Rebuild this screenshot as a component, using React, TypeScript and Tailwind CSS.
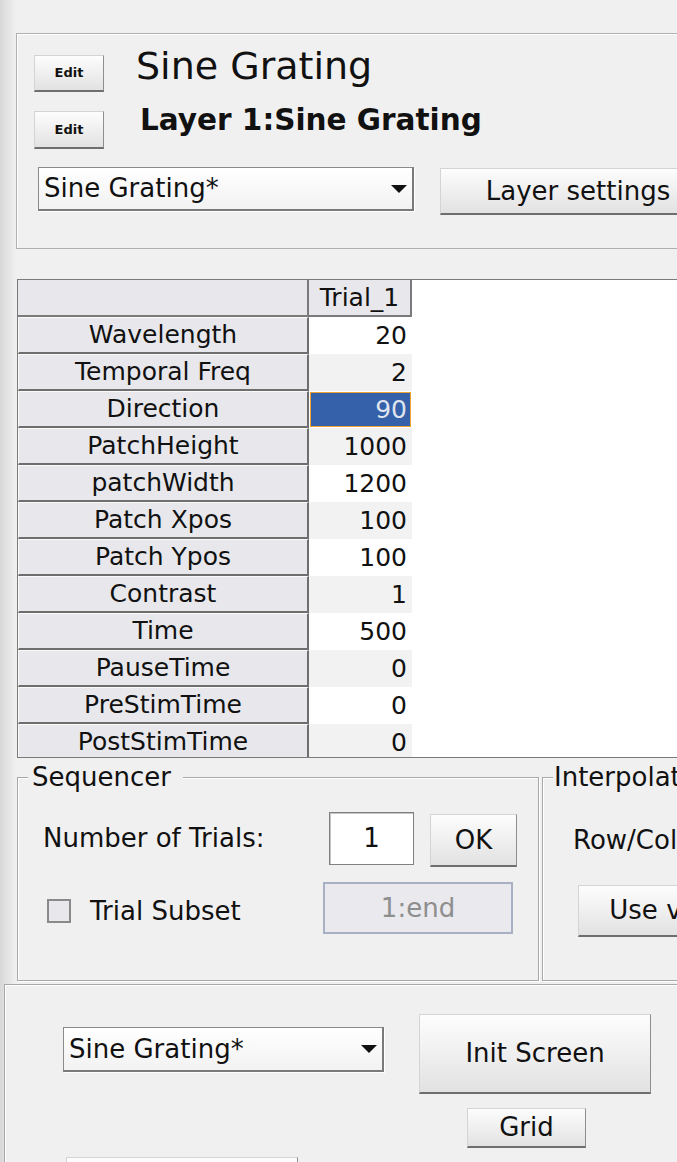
import React from "react";

const rows: [string, string][] = [
  ["Wavelength", "20"],
  ["Temporal Freq", "2"],
  ["Direction", "90"],
  ["PatchHeight", "1000"],
  ["patchWidth", "1200"],
  ["Patch Xpos", "100"],
  ["Patch Ypos", "100"],
  ["Contrast", "1"],
  ["Time", "500"],
  ["PauseTime", "0"],
  ["PreStimTime", "0"],
  ["PostStimTime", "0"],
];

const btn =
  "flex items-center justify-center shrink-0 border border-[#d4d4d4] border-r-[#8e8e8e] border-b-2 border-b-[#6e6e6e] bg-linear-to-b from-[#fdfdfd] to-[#e2e2e2] text-[#111]";

const Caret = () => (
  <svg width="16" height="8" viewBox="0 0 16 8" className="shrink-0">
    <path d="M0 0 H16 L8 8 Z" fill="#111" />
  </svg>
);

const Dropdown: React.FC<{ className: string }> = ({ className }) => (
  <div
    className={`flex items-center justify-between shrink-0 border border-[#8a8a8a] border-r-2 border-b-2 border-r-[#7a7a7a] border-b-[#7a7a7a] bg-linear-to-b from-white to-[#f2f2f2] pl-[5px] pr-[5px] text-[26px] text-[#111] shadow-[1px_1px_0_#fff] ${className}`}
  >
    <span>Sine Grating*</span>
    <Caret />
  </div>
);

const ParamTable: React.FC = () => (
  <div className="mt-[30px] ml-[17px] w-[700px] h-[479px] border border-[#7a7a7a] bg-white overflow-hidden flex flex-col text-[25px] text-[#111]">
    {/* header */}
    <div className="flex h-[37px] shrink-0">
      <div className="w-[291px] bg-[#e8e8ec] border-r-2 border-b-2 border-[#7a7a7a]" />
      <div className="w-[103px] bg-[#e8e8ec] border-r-2 border-b-2 border-[#7a7a7a] flex items-center justify-center">
        Trial_1
      </div>
      <div className="flex-1 bg-white" />
    </div>
    {rows.map(([label, value], i) => {
      const selected = label === "Direction";
      const shade = i % 2 === 0 ? "bg-white" : "bg-[#f2f2f2]";
      return (
        <div key={label} className="flex h-[37px] shrink-0">
          <div className="w-[291px] bg-[#e8e8ec] border-t border-l border-t-[#fafafa] border-l-[#fafafa] border-r-2 border-b-2 border-r-[#6e6e6e] border-b-[#6e6e6e] flex items-center justify-center">
            {label}
          </div>
          {selected ? (
            <div className="w-[101px] ml-[1px] my-[1px] bg-[#3461aa] border border-[#f0a232] flex items-center justify-end pr-[3px] text-[#dfe4ee]">
              {value}
            </div>
          ) : (
            <div className={`w-[103px] ${shade} flex items-center justify-end pr-[5px]`}>
              {value}
            </div>
          )}
          <div className="flex-1 bg-white" />
        </div>
      );
    })}
  </div>
);

const groupBox =
  "shrink-0 h-[217px] border border-[#a9a9a9] shadow-[inset_1px_1px_0_#fff,1px_1px_0_#fff]";

export default function App() {
  return (
    <div className="w-[677px] h-[1162px] overflow-hidden bg-[linear-gradient(to_right,#d8d8d8,#f0f0f0_16px)] font-['DejaVu_Sans',sans-serif] text-[#111]">
      {/* Stimulus / layer panel */}
      <div className="pt-[33px] pl-[16px]">
        <div className="w-[720px] h-[216px] border border-[#b0b0b0] shadow-[inset_1px_1px_0_#fff] bg-[#f0f0f0] pt-[21px] pl-[17px]">
          <div className="flex items-start">
            <button className={`${btn} w-[70px] h-[37px] text-[13px] font-bold`}>Edit</button>
            <div className="ml-[32px] -mt-[8px] text-[38px] leading-[38px]">Sine Grating</div>
          </div>
          <div className="flex items-start mt-[19px]">
            <button className={`${btn} w-[70px] h-[38px] text-[13px] font-bold`}>Edit</button>
            <div className="ml-[36px] -mt-[6px] text-[29.5px] leading-[30px] font-bold">
              Layer 1:Sine Grating
            </div>
          </div>
          <div className="flex items-start mt-[18px] ml-[4px]">
            <Dropdown className="w-[376px] h-[44px]" />
            <button className={`${btn} ml-[26px] mt-[1px] w-[276px] h-[47px] text-[26px]`}>
              Layer settings
            </button>
          </div>
        </div>
      </div>

      <ParamTable />

      {/* Sequencer + interpolation */}
      <div className="flex mt-[6px] ml-[17px] text-[26px]">
        <fieldset className={`${groupBox} w-[522px]`}>
          <legend className="ml-[10px] pl-[4px] pr-[12px] leading-[26px] bg-[#f0f0f0]">Sequencer</legend>
          <div className="pt-[22px] pl-[25px]">
            <div className="flex items-start h-[55px]">
              <div className="w-[286px] h-[53px] flex items-center">Number of Trials:</div>
              <div className="w-[85px] h-[53px] shrink-0 border border-[#808080] shadow-[inset_1px_1px_0_#c4c4c4] bg-white flex items-center justify-center">
                1
              </div>
              <button className={`${btn} ml-[16px] mt-[2px] w-[87px] h-[53px]`}>OK</button>
            </div>
            <div className="flex items-center mt-[15px] h-[52px]">
              <div className="ml-[4px] mt-[6px] w-[24px] h-[24px] shrink-0 border-2 border-[#8a8a8a] bg-[#e8e8ec]" />
              <div className="ml-[19px] mt-[7px] w-[233px]">Trial Subset</div>
              <div className="w-[190px] h-[52px] shrink-0 border-2 border-[#a9b0c4] bg-[#e9e9ee] flex items-center justify-center text-[#8e8e8e]">
                1:end
              </div>
            </div>
          </div>
        </fieldset>
        <fieldset className={`${groupBox} ml-[3px] w-[320px]`}>
          <legend className="ml-[10px] pl-[1px] pr-[4px] leading-[26px] bg-[#f0f0f0]">Interpolation</legend>
          <div className="pt-[35px] pl-[30px]">
            <div className="h-[30px] flex items-center whitespace-nowrap">Row/Col Interp:</div>
            <button className={`${btn} mt-[30px] ml-[5px] w-[204px] h-[52px]`}>Use values</button>
          </div>
        </fieldset>
      </div>

      {/* Screen panel */}
      <div className="mt-[3px] ml-[4px] w-[700px] h-[200px] border border-[#a9a9a9] shadow-[inset_1px_1px_0_#fff] bg-[#f0f0f0] flex pl-[58px] text-[26px]">
        <div className="flex flex-col pt-[42px]">
          <Dropdown className="w-[321px] h-[45px]" />
          <button className={`${btn} mt-[85px] ml-[3px] w-[232px] h-[40px]`}>Reset</button>
        </div>
        <div className="flex flex-col ml-[35px] pt-[29px]">
          <button className={`${btn} w-[232px] h-[80px]`}>Init Screen</button>
          <button className={`${btn} mt-[14px] ml-[48px] w-[119px] h-[40px]`}>Grid</button>
        </div>
      </div>
    </div>
  );
}
